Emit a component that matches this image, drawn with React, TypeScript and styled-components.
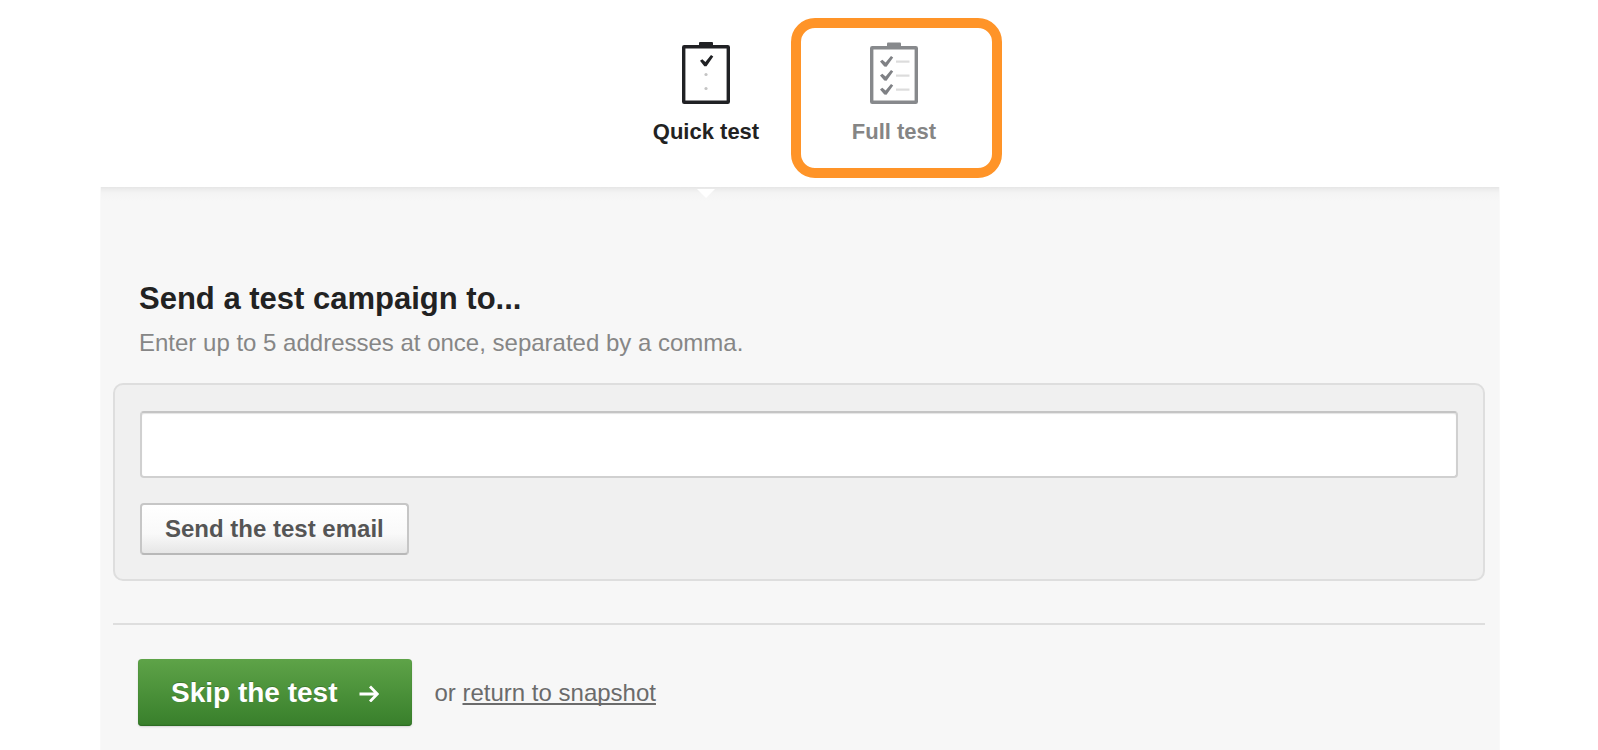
import React from 'react';
import styled, { createGlobalStyle } from 'styled-components';

const GlobalStyle = createGlobalStyle`
  *, *::before, *::after {
    box-sizing: border-box;
  }
  body {
    margin: 0;
    background: #fff;
    color: #222;
    font-family: "Liberation Sans", Arial, Helvetica, sans-serif;
  }
  button, input {
    font: inherit;
  }
`;

const Page = styled.div`
  display: flex;
  flex-direction: column;
  min-height: 100vh;
  padding: 0 98px 0 100px;
`;

const TabBar = styled.div`
  display: flex;
  justify-content: center;
  height: 187px;
`;

const Tab = styled.button<{ $active?: boolean }>`
  position: relative;
  display: flex;
  flex-direction: column;
  align-items: center;
  gap: 15px;
  width: 188px;
  padding: 42px 0 0;
  border: 0;
  background: none;
  color: ${({ $active }) => ($active ? '#222' : '#858585')};
  font-size: 22px;
  font-weight: bold;
  line-height: 26px;
  cursor: pointer;

  &::after {
    content: "";
    display: ${({ $active }) => ($active ? 'block' : 'none')};
    position: absolute;
    z-index: 1;
    top: calc(100% + 2px);
    left: 50%;
    width: 18px;
    height: 9px;
    transform: translateX(-50%);
    background: #fff;
    clip-path: polygon(0 0, 100% 0, 50% 100%);
  }
`;

const Highlight = styled.span`
  position: absolute;
  top: 18px;
  left: -9px;
  right: -14px;
  height: 160px;
  border: 10px solid #ff9428;
  border-radius: 24px;
  pointer-events: none;
`;

const Panel = styled.main`
  flex: 1;
  padding: 92px 14px 22px 12px;
  border: solid #f9f9f9;
  border-width: 0 1px;
  background: linear-gradient(#e6e6e6 0, #eeeeee 3px, #f4f4f4 6px, #f7f7f7 14px);
`;

const Intro = styled.div`
  padding: 0 26px;
`;

const Title = styled.h1`
  margin: 0 0 8px;
  font-size: 31px;
  line-height: 40px;
`;

const Hint = styled.p`
  margin: 0;
  color: #868686;
  font-size: 24px;
  line-height: 32px;
`;

const SendBox = styled.div`
  display: flex;
  flex-direction: column;
  align-items: flex-start;
  gap: 25px;
  margin-top: 24px;
  padding: 26px 25px 24px;
  border: 2px solid #dedede;
  border-radius: 10px;
  background: #f0f0f0;
`;

const AddressInput = styled.input`
  width: 100%;
  height: 67px;
  padding: 0 16px;
  border: 2px solid #d0d0d0;
  border-top-color: #c4c4c4;
  border-radius: 4px;
  background: #fff;
  box-shadow: inset 0 1px 1px #e4e4e4;
  color: #222;
  font-size: 24px;
`;

const SendButton = styled.button`
  height: 52px;
  padding: 0 23px;
  border: 2px solid #c6c6c6;
  border-bottom-color: #b8b8b8;
  border-radius: 4px;
  background: linear-gradient(#fff, #f9f9f9 60%, #e6e6e6);
  color: #555;
  font-size: 24px;
  font-weight: bold;
  cursor: pointer;
`;

const Divider = styled.hr`
  height: 2px;
  margin: 42px 0 34px;
  border: 0;
  background: #dedede;
`;

const Actions = styled.div`
  display: flex;
  align-items: center;
  gap: 22px;
  padding: 0 25px;
  color: #6b6b6b;
  font-size: 24px;
`;

const SkipButton = styled.button`
  display: flex;
  align-items: center;
  gap: 22px;
  height: 67px;
  padding: 0 33px;
  border: 0;
  border-radius: 4px;
  background: linear-gradient(#5ea348, #387f2b);
  box-shadow: inset 0 -1px 1px #2d6b24, 0 1px 2px #d4d4d4;
  color: #fff;
  font-size: 28px;
  font-weight: bold;
  text-shadow: 0 -1px 0 #3f7a30;
  cursor: pointer;
`;

const ReturnLink = styled.a`
  color: inherit;
  text-decoration: underline;
  text-decoration-thickness: 2px;
  text-decoration-skip-ink: none;
  text-underline-offset: 2px;
`;

const QuickIcon = () => (
  <svg width="48" height="62" viewBox="0 0 48 62" fill="none" aria-hidden="true">
    <rect x="17" y="0" width="14" height="5" rx="1" fill="#202124" />
    <rect x="1.7" y="4.7" width="44.6" height="55.6" rx="0.5" stroke="#202124" strokeWidth="3.4" />
    <path d="M18 18.8 L20.3 17.2 L23.4 20 L29 13 L31.3 14.4 L24.5 24.2 L22.3 24.2 Z" fill="#202124" />
    <circle cx="24" cy="32.5" r="1.6" fill="#c4c4c4" />
    <circle cx="24" cy="46.5" r="1.6" fill="#c4c4c4" />
  </svg>
);

const FullIcon = () => (
  <svg width="48" height="62" viewBox="0 0 48 62" fill="none" aria-hidden="true">
    <rect x="17" y="0.5" width="14" height="5" rx="1" fill="#87898c" />
    <rect x="1.7" y="5.7" width="44.6" height="54.6" rx="0.5" stroke="#87898c" strokeWidth="3.4" />
    {[0, 14, 28].map((y) => (
      <g key={y} transform={`translate(0 ${y})`}>
        <path d="M10 19.4 L12.3 17.8 L15.6 20.4 L21 14 L23.2 15.4 L16.5 24.8 L14.3 24.4 Z" fill="#7f8185" />
        <path d="M26 19.6 H39.5" stroke="#dcdcdc" strokeWidth="2.2" />
      </g>
    ))}
  </svg>
);

const ArrowIcon = () => (
  <svg width="20" height="18" viewBox="0 0 20 18" fill="none" stroke="#fff" strokeWidth="2.8" aria-hidden="true">
    <path d="M0.5 10 H18 M11 2.5 L18.3 10 L11 17.5" />
  </svg>
);

export default function App() {
  return (
    <>
      <GlobalStyle />
      <Page>
        <TabBar role="tablist">
          <Tab type="button" role="tab" aria-selected="true" $active>
            <QuickIcon />
            Quick test
          </Tab>
          <Tab type="button" role="tab" aria-selected="false">
            <FullIcon />
            Full test
            <Highlight />
          </Tab>
        </TabBar>
        <Panel>
          <Intro>
            <Title>
              <label htmlFor="addresses">Send a test campaign to...</label>
            </Title>
            <Hint id="addresses-hint">Enter up to 5 addresses at once, separated by a comma.</Hint>
          </Intro>
          <SendBox>
            <AddressInput id="addresses" type="text" aria-describedby="addresses-hint" />
            <SendButton type="button">Send the test email</SendButton>
          </SendBox>
          <Divider />
          <Actions>
            <SkipButton type="button">
              Skip the test
              <ArrowIcon />
            </SkipButton>
            <span>
              or <ReturnLink href="#snapshot">return to snapshot</ReturnLink>
            </span>
          </Actions>
        </Panel>
      </Page>
    </>
  );
}
